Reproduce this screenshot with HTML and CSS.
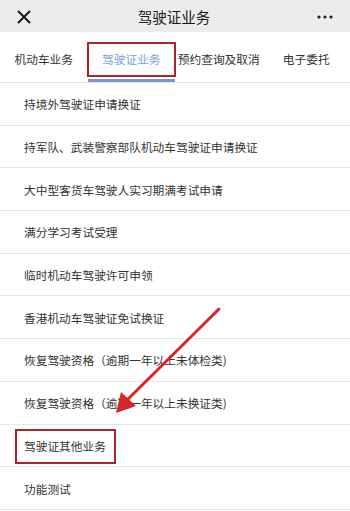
FILE: index.html
```html
<!DOCTYPE html>
<html lang="zh-CN">
  <head>
    <meta charset="UTF-8" />
    <meta name="viewport" content="width=device-width, initial-scale=1.0" />
    <title>驾驶证业务</title>
    <link rel="stylesheet" href="styles.css">
  </head>
  <body>
    <div class="page">
      <div class="top-bar">
        <svg class="close-btn" width="14" height="14" viewBox="0 0 14 14">
          <path d="M1 1 L13 13 M13 1 L1 13" stroke="#1a1a1a" stroke-width="2" fill="none" />
        </svg>
        <div class="top-title">驾驶证业务</div>
        <svg class="more-btn" width="16" height="4" viewBox="0 0 16 4">
          <circle cx="2" cy="2" r="1.6" fill="#222" />
          <circle cx="8" cy="2" r="1.6" fill="#222" />
          <circle cx="14" cy="2" r="1.6" fill="#222" />
        </svg>
      </div>

      <div class="tabs">
        <div class="tab">机动车业务</div>
        <div class="tab active">驾驶证业务<span class="mark-box"></span></div>
        <div class="tab">预约查询及取消</div>
        <div class="tab">电子委托</div>
      </div>

      <ul class="list">
        <li>持境外驾驶证申请换证</li>
        <li>持军队、武装警察部队机动车驾驶证申请换证</li>
        <li>大中型客货车驾驶人实习期满考试申请</li>
        <li>满分学习考试受理</li>
        <li>临时机动车驾驶许可申领</li>
        <li>香港机动车驾驶证免试换证</li>
        <li>恢复驾驶资格（逾期一年以上未体检类)</li>
        <li>恢复驾驶资格（逾期一年以上未换证类)</li>
        <li class="marked">驾驶证其他业务<span class="mark-box"></span></li>
        <li>功能测试</li>
      </ul>

      <svg class="arrow" width="350" height="511" viewBox="0 0 350 511">
        <line x1="219" y1="309" x2="124" y2="403" stroke="#d7262b" stroke-width="3" stroke-linecap="round" />
        <polygon points="116,413 121,392 136,406" fill="#d7262b" />
      </svg>
    </div>
  </body>
</html>
```

FILE: styles.css
```css
* {
  box-sizing: border-box;
}

body {
  margin: 0;
  background: #fff;
  font-family: "Noto Sans CJK SC", "Noto Sans", sans-serif;
  color: #333;
}

.page {
  position: relative;
  width: 350px;
  height: 511px;
  overflow: hidden;
}

.top-bar {
  height: 32px;
  background: #ececec;
  display: flex;
  align-items: center;
  justify-content: space-between;
  padding: 0 16px 0 16px;
}

.close-btn {
  margin-left: 1px;
  margin-top: 1px;
}

.top-title {
  font-size: 14.5px;
  color: #1a1a1a;
}

.more-btn {
  margin-top: 1px;
  margin-right: 1px;
}

.tabs {
  display: flex;
  height: 51px;
  border-bottom: 1px solid #e3e3e3;
}

.tab {
  position: relative;
  flex: 1;
  display: flex;
  align-items: center;
  justify-content: center;
  padding-top: 3px;
  font-size: 11.7px;
  color: #333;
  white-space: nowrap;
}

.tab.active {
  color: #79a3d6;
}

.tab.active::after {
  content: "";
  position: absolute;
  left: 0;
  right: 0;
  bottom: 0;
  height: 3px;
  background: #7e96c6;
}

.tab .mark-box {
  position: absolute;
  left: -1px;
  right: -1px;
  top: 10px;
  height: 35px;
  border: 2px solid #a8252c;
}

.list {
  list-style: none;
  margin: 0;
  padding: 0;
}

.list li {
  position: relative;
  height: 42.7px;
  display: flex;
  align-items: center;
  padding-left: 24px;
  font-size: 11.7px;
  color: #333;
  border-bottom: 1px solid #e6e6e6;
}

.list li .mark-box {
  position: absolute;
  left: 15px;
  top: 4px;
  width: 101px;
  height: 35px;
  border: 2px solid #a8252c;
}

.arrow {
  position: absolute;
  left: 0;
  top: 0;
  pointer-events: none;
}
```
